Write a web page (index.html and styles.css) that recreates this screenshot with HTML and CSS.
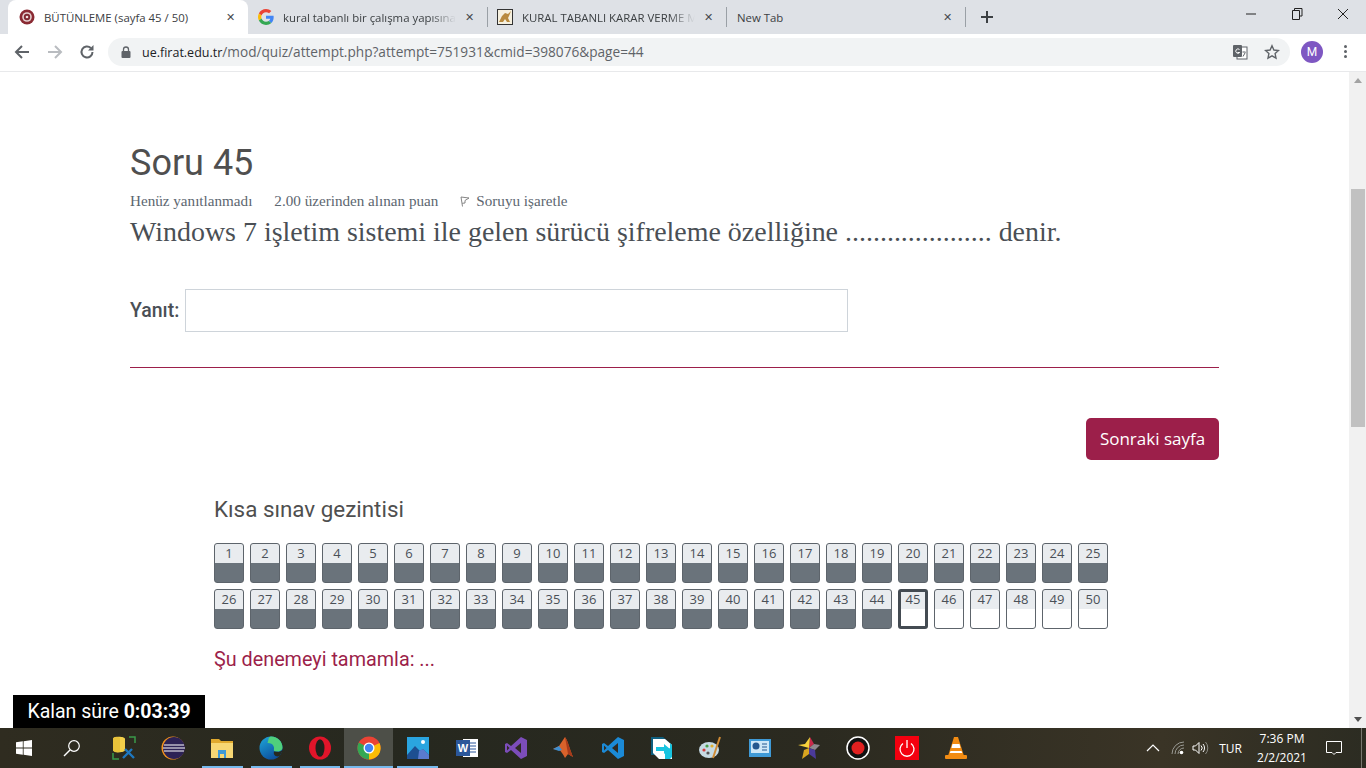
FILE: index.html

```html
<!DOCTYPE html>
<html lang="tr">
<head>
  <meta charset="UTF-8" />
  <title>BÜTÜNLEME (sayfa 45 / 50)</title>
  <link rel="stylesheet" href="styles.css">
</head>
<body>
  <!-- browser tabs -->
  <div class="tabstrip">
    <div class="tab tab-active">
      <svg class="favicon" viewBox="0 0 16 16"><circle cx="8" cy="8" r="7.500" fill="#8a2a33"/><circle cx="8" cy="8" r="4.800" fill="#e4cfcf"/><circle cx="8" cy="8" r="3.200" fill="#7f2730"/><circle cx="8" cy="8" r="1.300" fill="#efe0e0"/></svg>
      <span class="tab-title">BÜTÜNLEME (sayfa 45 / 50)</span>
      <span class="tab-close">✕</span>
    </div>
    <div class="tab">
      <svg class="favicon" viewBox="0 0 48 48"><path fill="#EA4335" d="M24 9.500c3.500 0 6.700 1.200 9.200 3.600l6.900-6.900C35.900 2.400 30.500 0 24 0 14.600 0 6.500 5.400 2.600 13.200l8 6.200C12.500 13.700 17.800 9.500 24 9.500z"/><path fill="#4285F4" d="M47 24.500c0-1.600-.1-3.100-.4-4.500H24v9h12.900c-.6 3-2.200 5.500-4.700 7.200l7.700 6c4.500-4.200 7.100-10.300 7.100-17.700z"/><path fill="#FBBC05" d="M10.600 28.600c-.5-1.400-.8-3-.8-4.600s.3-3.200.8-4.600l-8-6.200C.9 16.500 0 20.100 0 24s.9 7.500 2.600 10.800l8-6.200z"/><path fill="#34A853" d="M24 48c6.500 0 11.900-2.100 15.900-5.800l-7.700-6c-2.200 1.400-4.900 2.300-8.200 2.300-6.200 0-11.500-4.200-13.400-9.900l-8 6.200C6.500 42.600 14.600 48 24 48z"/></svg>
      <span class="tab-title tab-fade">kural tabanlı bir çalışma yapısına</span>
      <span class="tab-close">✕</span>
    </div>
    <div class="tab tab-sep">
      <svg class="favicon" viewBox="0 0 16 16"><rect x=".5" y=".5" width="15" height="15" fill="#f6f0df" stroke="#333"/><path d="M2 13l3-6 3-3 3 1 3-3-2 5-1 2 2 4h-3l-2-3-2 3z" fill="#b98a3e"/></svg>
      <span class="tab-title tab-fade">KURAL TABANLI KARAR VERME M</span>
      <span class="tab-close">✕</span>
    </div>
    <div class="tab tab-sep tab-new">
      <span class="tab-title">New Tab</span>
      <span class="tab-close">✕</span>
    </div>
    <div class="tab-sep new-tab-btn">
      <svg width="14" height="14" viewBox="0 0 14 14"><path d="M7 1v12M1 7h12" stroke="#3c4043" stroke-width="2"/></svg>
    </div>
    <div class="window-buttons">
      <svg width="12" height="12" viewBox="0 0 12 12"><path d="M1 6h10" stroke="#222" stroke-width="1"/></svg>
      <svg width="12" height="12" viewBox="0 0 12 12"><path d="M3.500 2.500V.5h7.500v7.500h-2M1.500 2.500h7v9h-7z" fill="none" stroke="#222"/></svg>
      <svg width="12" height="12" viewBox="0 0 12 12"><path d="M1 1l10 10M11 1L1 11" stroke="#222"/></svg>
    </div>
  </div>

  <!-- address bar -->
  <div class="toolbar">
    <svg class="nav-icon" viewBox="0 0 16 16"><path d="M15 8H2M8 2L2 8l6 6" fill="none" stroke="#5f6368" stroke-width="2"/></svg>
    <svg class="nav-icon" viewBox="0 0 16 16"><path d="M1 8h13M8 2l6 6-6 6" fill="none" stroke="#b9bcc0" stroke-width="2"/></svg>
    <svg class="nav-icon" viewBox="0 0 16 16"><path d="M13.500 8a5.500 5.500 0 1 1-1.700-4" fill="none" stroke="#5f6368" stroke-width="2"/><path d="M14.500 1v5.500H9z" fill="#5f6368"/></svg>
    <div class="omnibox">
      <svg class="lock" viewBox="0 0 10 12"><path d="M2.500 5V3.500a2.500 2.500 0 0 1 5 0V5" fill="none" stroke="#5f6368" stroke-width="1.300"/><rect x=".5" y="5" width="9" height="7" rx="1" fill="#5f6368"/></svg>
      <span class="url"><span class="url-host">ue.firat.edu.tr</span>/mod/quiz/attempt.php?attempt=751931&amp;cmid=398076&amp;page=44</span>
      <svg class="omni-icon translate" viewBox="0 0 16 16"><rect x="5" y="3" width="10" height="12" fill="#fff" stroke="#5f6368"/><rect x="1" y="1" width="9" height="12" rx="1" fill="#5f6368"/><path d="M7.500 5.500a2.200 2.200 0 1 0 .2 3H5.500" fill="none" stroke="#fff"/><path d="M10.500 8h3M11 12.500l2.300-4" stroke="#5f6368" fill="none"/></svg>
      <svg class="omni-icon" viewBox="0 0 16 16"><path d="M8 1.800l1.900 4.200 4.600.5-3.400 3.100.9 4.600L8 11.900l-4 2.300.9-4.600L1.500 6.500l4.600-.5z" fill="none" stroke="#5f6368" stroke-width="1.400"/></svg>
    </div>
    <div class="avatar">M</div>
    <div class="kebab"><i></i><i></i><i></i></div>
  </div>

  <div class="viewport">
    <main class="page">
      <h1 class="q-title">Soru 45</h1>
      <div class="q-info">
        <span>Henüz yanıtlanmadı</span>
        <span>2.00 üzerinden alınan puan</span>
        <span class="q-flag">
          <svg width="10" height="12" viewBox="0 0 10 12"><path d="M2.500 11.500L1 2l8 1-4 2.500 0 2.500-2.800.3" fill="none" stroke="#777" stroke-width=".9"/></svg>
          Soruyu işaretle
        </span>
      </div>
      <p class="q-text">Windows 7 işletim sistemi ile gelen sürücü şifreleme özelliğine ..................... denir.</p>
      <div class="answer">
        <label class="answer-label" for="answer">Yanıt:</label>
        <input class="answer-input" id="answer" type="text" />
      </div>
      <hr class="divider" />
      <div class="next-row"><button class="next-btn" type="button">Sonraki sayfa</button></div>

      <section class="quiz-nav">
        <h2 class="nav-title">Kısa sınav gezintisi</h2>
        <div class="nav-grid">
          <a class="qn answered">1</a><a class="qn answered">2</a><a class="qn answered">3</a><a class="qn answered">4</a><a class="qn answered">5</a>
          <a class="qn answered">6</a><a class="qn answered">7</a><a class="qn answered">8</a><a class="qn answered">9</a><a class="qn answered">10</a>
          <a class="qn answered">11</a><a class="qn answered">12</a><a class="qn answered">13</a><a class="qn answered">14</a><a class="qn answered">15</a>
          <a class="qn answered">16</a><a class="qn answered">17</a><a class="qn answered">18</a><a class="qn answered">19</a><a class="qn answered">20</a>
          <a class="qn answered">21</a><a class="qn answered">22</a><a class="qn answered">23</a><a class="qn answered">24</a><a class="qn answered">25</a>
          <a class="qn answered">26</a><a class="qn answered">27</a><a class="qn answered">28</a><a class="qn answered">29</a><a class="qn answered">30</a>
          <a class="qn answered">31</a><a class="qn answered">32</a><a class="qn answered">33</a><a class="qn answered">34</a><a class="qn answered">35</a>
          <a class="qn answered">36</a><a class="qn answered">37</a><a class="qn answered">38</a><a class="qn answered">39</a><a class="qn answered">40</a>
          <a class="qn answered">41</a><a class="qn answered">42</a><a class="qn answered">43</a><a class="qn answered">44</a><a class="qn current">45</a>
          <a class="qn">46</a><a class="qn">47</a><a class="qn">48</a><a class="qn">49</a><a class="qn">50</a>
        </div>
        <a class="finish-link">Şu denemeyi tamamla: ...</a>
      </section>
    </main>
    <div class="scrollbar">
      <div class="sb-arrow sb-up"></div>
      <div class="sb-track"><div class="sb-thumb"></div></div>
      <div class="sb-arrow sb-down"></div>
    </div>
    <div class="timer">Kalan süre <b>0:03:39</b></div>
  </div>

  <!-- windows taskbar -->
  <footer class="taskbar">
    <div class="task-system">
      <svg width="16" height="16" viewBox="0 0 16 16"><path fill="#fff" d="M0 2.300l6.800-1v6.300H0zM7.600 1.200L16 0v7.600H7.600zM0 8.400h6.800v6.300l-6.800-1zM7.600 8.400H16V16l-8.400-1.200z"/></svg>
    </div>
    <div class="task-system">
      <svg width="18" height="18" viewBox="0 0 18 18"><circle cx="11" cy="7" r="5.300" fill="none" stroke="#fff" stroke-width="1.200"/><path d="M7 11l-6 6" stroke="#fff" stroke-width="1.400"/></svg>
    </div>
    <div class="task-apps">
      <div class="app"><svg viewBox="0 0 24 24"><path d="M17 1h6v6M1 17v6h6" fill="none" stroke="#3a9a4a" stroke-width="1.500"/><path d="M1 3c0-3 12-3 12 0v11c0 3-12 3-12 0z" fill="#f2cf4a"/><path d="M1 3c0-3 7-3 7 0v13c-3 1-7 0-7-2z" fill="#e8c23a"/><path d="M11 22l9-9M13 13l9 9" stroke="#1f78c0" stroke-width="2.400"/></svg></div>
      <div class="app"><svg viewBox="0 0 24 24"><circle cx="12" cy="12" r="11.500" fill="#f7941e"/><circle cx="13" cy="12" r="11" fill="#2c2255"/><path d="M3 9h20M2 12h22M3 15h20" stroke="#fff" stroke-width="1.200"/></svg></div>
      <div class="app running"><svg viewBox="0 0 24 24"><path d="M1 3h8l2 2h12v4H1z" fill="#e0a92e"/><rect x="1" y="7" width="22" height="15" fill="#f7d774"/><path d="M8 14h8v8h-2v-4h-4v4H8z" fill="#3f9ad6"/></svg></div>
      <div class="app running"><svg viewBox="0 0 24 24"><defs><linearGradient id="edge" x1="0" y1="0" x2=".6" y2="1"><stop offset="0" stop-color="#1fa7d9"/><stop offset="1" stop-color="#0c4f9e"/></linearGradient></defs><circle cx="12" cy="12" r="11.500" fill="url(#edge)"/><path d="M12 .5C19 .5 23.500 6 23.500 11.500c0 3-3.500 4.500-6.500 4-2-.3-2.500-1-2-2.500C15.500 9.500 12.500 6.500 8.500 7 10 3 9 1 12 .5z" fill="#4fd07c"/><path d="M15 15.500c-1 3 1.500 6 5.500 4.500l3.500-6-4 2z" fill="#26281f"/></svg></div>
      <div class="app running"><svg viewBox="0 0 24 24"><ellipse cx="12" cy="12" rx="11" ry="11.500" fill="#e1152a"/><ellipse cx="12" cy="12" rx="4.500" ry="8.800" fill="#20221c"/></svg></div>
      <div class="app running app-current"><svg viewBox="0 0 24 24"><circle cx="12" cy="12" r="11.500" fill="#ea4335"/><path d="M12 12L22.500 7A11.500 11.500 0 0 1 12 23.500z" fill="#fbbc05"/><path d="M12 12L12 23.500A11.500 11.500 0 0 1 1.800 6.500z" fill="#34a853"/><circle cx="12" cy="12" r="5.500" fill="#fff"/><circle cx="12" cy="12" r="4.200" fill="#4285f4"/></svg></div>
      <div class="app running"><svg viewBox="0 0 24 24"><rect x="1" y="1" width="22" height="22" fill="#2aa5e0"/><path d="M1 19l8-9 5 5 3-2 6 6v4H1z" fill="#1d4f91"/><path d="M13 15l4-2 6 6v4H12z" fill="#5a7bd0"/><circle cx="17" cy="6" r="2" fill="#fff"/></svg></div>
      <div class="app"><svg viewBox="0 0 24 24"><rect x="8" y="3" width="15" height="18" fill="#fff"/><path d="M14 7h7M14 10h7M14 13h7M14 16h7" stroke="#2b579a"/><rect x="1" y="4" width="14" height="16" fill="#2b579a"/><text class="word-w" x="8" y="16" text-anchor="middle">W</text></svg></div>
      <div class="app"><svg viewBox="0 0 24 24"><path d="M17 1l6 3v16l-6 3-10-9-4 3-2-1V8l2-1 4 3z" fill="#7c4dba"/><path d="M17 7l-6 5 6 5z" fill="#2f2a22"/><path d="M3 9.500v5l2.500-2.500z" fill="#2f2a22"/></svg></div>
      <div class="app"><svg viewBox="0 0 24 24"><path d="M1 13l6-3 6-9c3 4 5 13 8 20l-5-3-3 4c-2-4-4-7-6-8z" fill="#d9622b"/><path d="M1 13l6-3 3 4-3 1z" fill="#3f8fd0"/><path d="M13 1c3 4 5 13 8 20l-5-3z" fill="#a83a1a"/></svg></div>
      <div class="app"><svg viewBox="0 0 24 24"><path d="M17 1l6 3v16l-6 3-10-9-4 3-2-1V8l2-1 4 3z" fill="#1b8ad6"/><path d="M17 7l-6 5 6 5z" fill="#2f2a22"/><path d="M3 9.500v5l2.500-2.500z" fill="#2f2a22"/></svg></div>
      <div class="app"><svg viewBox="0 0 24 24"><path d="M1 1h12l6 5v13H1z" fill="#0f5f7f"/><path d="M3 3h12l7 6v14H9l-6-6z" fill="#fff"/><path d="M15 16v7h5l2-2V9l-2-2v5z" fill="#18c4e0"/><path d="M6 11h8V8l6 5-6 5v-3H6z" fill="#18c4e0"/></svg></div>
      <div class="app"><svg viewBox="0 0 24 24"><ellipse cx="10" cy="14" rx="10" ry="8" fill="#c7dbe4"/><circle cx="5" cy="14" r="1.600" fill="#d43d3d"/><circle cx="8" cy="10" r="1.600" fill="#4aa04a"/><circle cx="13" cy="10" r="1.600" fill="#e0b030"/><circle cx="9" cy="17" r="1.600" fill="#555"/><path d="M21 1l-7 21" stroke="#d08b35" stroke-width="2"/></svg></div>
      <div class="app"><svg viewBox="0 0 24 24"><rect x="1" y="3" width="22" height="18" fill="#3f9ad6"/><rect x="3" y="5" width="18" height="12" fill="#cfe8f7"/><circle cx="8" cy="10" r="3.500" fill="#24588f"/><path d="M14 8h5M14 11h5M14 14h5" stroke="#24588f"/></svg></div>
      <div class="app"><svg viewBox="0 0 24 24"><path d="M12 12L13 1l4 7z" fill="#c92a4b"/><path d="M12 12l5-4 6 1-5 5z" fill="#8f8a8e"/><path d="M12 12l6 2 1 9-7-5z" fill="#4b3a9a"/><path d="M12 12v6l-7 5 2-9z" fill="#d9a520"/><path d="M12 12L1 9l7-1 5-7z" fill="#f7d23c"/></svg></div>
      <div class="app"><svg viewBox="0 0 24 24"><circle cx="12" cy="12" r="11" fill="#111" stroke="#fff" stroke-width="1.500"/><circle cx="12" cy="12" r="6.500" fill="#e02020"/></svg></div>
      <div class="app"><svg viewBox="0 0 24 24"><rect width="24" height="24" fill="#f4000f"/><path d="M8 7.500a7 7 0 1 0 8 0M12 4v8" fill="none" stroke="#fff" stroke-width="1.300"/></svg></div>
      <div class="app"><svg viewBox="0 0 24 24"><path d="M10 1h4l6 19H4z" fill="#f28c13"/><path d="M8.500 8h7l1 4H7.500zM6.500 15h11l.8 2H5.800z" fill="#fff"/><rect x="1" y="19" width="22" height="4" rx="1" fill="#f28c13"/></svg></div>
    </div>
    <div class="tray">
      <svg width="14" height="8" viewBox="0 0 14 8"><path d="M1 7l6-6 6 6" fill="none" stroke="#fff" stroke-width="1.200"/></svg>
      <svg class="tray-wifi" width="14" height="14" viewBox="0 0 14 14"><path d="M1 13a12 12 0 0 1 12-12M4 13a9 9 0 0 1 9-9M7 13a6 6 0 0 1 6-6" fill="none" stroke="#9a9a94"/><circle cx="10.500" cy="11.500" r="1.800" fill="#fff"/></svg>
      <svg class="tray-sound" width="17" height="14" viewBox="0 0 17 14"><path d="M1 5h2.500L7 1.500v11L3.500 9H1z" fill="none" stroke="#fff"/><path d="M9 4.500a3.500 3.500 0 0 1 0 5M11 3a6 6 0 0 1 0 8" fill="none" stroke="#fff"/><path d="M13.500 1a9 9 0 0 1 0 12" fill="none" stroke="#8a8a84"/></svg>
      <span class="tray-lang">TUR</span>
      <div class="tray-clock"><span>7:36 PM</span><span>2/2/2021</span></div>
      <svg class="tray-note" width="16" height="16" viewBox="0 0 16 16"><path d="M.5 1.500h15v11H10l-2 2-2-2H.5z" fill="none" stroke="#fff"/></svg>
      <div class="show-desktop"></div>
    </div>
  </footer>
</body>
</html>
```

FILE: styles.css

```css
* {
  box-sizing: border-box;
}
html, body {
  height: 100%;
}
body {
  margin: 0;
  height: 768px;
  overflow: hidden;
  display: flex;
  flex-direction: column;
  background: #fff;
  font-family: 'Roboto', sans-serif;
  color: #495057;
}

/* browser chrome */
.tabstrip {
  height: 34px;
  flex: none;
  display: flex;
  align-items: stretch;
  background: #dee1e6;
  padding-left: 8px;
  font-family: 'Open Sans', sans-serif;
  font-size: 11.400px;
  color: #3c4043;
}
.tab {
  width: 239px;
  display: flex;
  align-items: center;
  padding: 0 10px;
  gap: 9px;
  position: relative;
}
.tab-active {
  background: #fff;
  width: 240px;
  border-radius: 8px 8px 0 0;
  padding-left: 11px;
}
.tab-sep::before {
  content: "";
  position: absolute;
  left: 0;
  top: 7px;
  height: 20px;
  width: 1px;
  background: #9aa0a6;
}
.tab-new {
  padding-left: 11px;
}
.favicon {
  width: 16px;
  height: 16px;
  flex: none;
}
.tab-title {
  flex: 1;
  min-width: 0;
  white-space: nowrap;
}
.tab-fade {
  -webkit-mask-image: linear-gradient(90deg, #000 85%, transparent);
  mask-image: linear-gradient(90deg, #000 85%, transparent);
}
.tab-close {
  font-size: 11px;
  font-weight: 700;
  color: #45494e;
  width: 12px;
  flex: none;
  font-family: 'DejaVu Sans', sans-serif;
}
.new-tab-btn {
  position: relative;
  width: 44px;
  display: flex;
  align-items: center;
  justify-content: center;
}
.window-buttons {
  margin-left: auto;
  display: flex;
  align-items: flex-start;
  gap: 34px;
  padding: 8px 17px 0 0;
}

.toolbar {
  height: 38px;
  flex: none;
  display: flex;
  align-items: center;
  background: #fff;
  padding: 0 0 2px 14px;
  border-bottom: 1px solid #e8e9eb;
}
.nav-icon {
  width: 16px;
  height: 16px;
  margin-right: 16.500px;
}
.omnibox {
  margin-left: -3.500px;
  width: 1182px;
  height: 28px;
  border-radius: 14px;
  background: #f1f3f4;
  display: flex;
  align-items: center;
  padding: 0 10px 0 13px;
}
.lock {
  width: 10px;
  height: 12px;
  margin-right: 11px;
}
.url {
  flex: 1;
  font-family: 'Open Sans', sans-serif;
  font-size: 13.650px;
  color: #5f6368;
}
.url-host {
  font-size: 12.500px;
  color: #202124;
}
.omni-icon {
  width: 16px;
  height: 16px;
  margin-left: 16px;
}
.translate {
  margin-left: 0;
}
.avatar {
  width: 22px;
  height: 22px;
  margin-left: 11px;
  border-radius: 50%;
  background: #7e57c2;
  color: #fff;
  font-size: 12px;
  display: flex;
  align-items: center;
  justify-content: center;
}
.kebab {
  margin-left: 21px;
  display: flex;
  flex-direction: column;
  gap: 2px;
}
.kebab i {
  width: 3px;
  height: 3px;
  border-radius: 50%;
  background: #5f6368;
}

/* page */
.viewport {
  flex: 1;
  min-height: 0;
  display: flex;
  position: relative;
}
.page {
  flex: 1;
  padding: 0 130px;
  background: #fff;
}
.q-title {
  margin: 69px 0 0;
  font-size: 36px;
  font-weight: 400;
  line-height: 44px;
  color: #4f4f4f;
}
.q-info {
  margin-top: 7px;
  display: flex;
  gap: 22px;
  font-family: 'Liberation Serif', serif;
  font-size: 15.150px;
  line-height: 17px;
  color: #5c6670;
}
.q-flag {
  display: flex;
  align-items: center;
  gap: 6px;
}
.q-text {
  margin: 5px 0 0;
  font-family: 'Liberation Serif', serif;
  font-size: 27.950px;
  line-height: 36px;
  color: #4a4f55;
}
.answer {
  margin-top: 39px;
  display: flex;
  align-items: center;
  gap: 6px;
}
.answer-label {
  font-size: 19.500px;
  font-weight: 500;
  color: #4a4f55;
}
.answer-input {
  width: 663px;
  height: 43px;
  border: 1px solid #ced4da;
  background: #fff;
}
.divider {
  margin: 35px 0 0;
  border: 0;
  border-top: 1px solid #9c1f4a;
}
.next-row {
  display: flex;
  justify-content: flex-end;
  margin-top: 50px;
}
.next-btn {
  width: 133px;
  height: 42px;
  padding: 0 0 2px;
  border: 0;
  border-radius: 5px;
  background: #9c1f4a;
  color: #fff;
  font-family: 'Open Sans', sans-serif;
  font-size: 17px;
}
.quiz-nav {
  margin: 36px 0 0 84px;
}
.nav-title {
  margin: 0;
  font-size: 22.400px;
  font-weight: 400;
  line-height: 26px;
  color: #4f4f4f;
}
.nav-grid {
  margin-top: 21px;
  display: grid;
  grid-template-columns: repeat(25, 30px);
  grid-auto-rows: 40px;
  gap: 6px;
}
.qn {
  border: 1px solid #5d646b;
  border-radius: 3px;
  background: linear-gradient(#e9ecef 0 19px, #fff 19px);
  font-family: 'Open Sans', sans-serif;
  font-size: 13px;
  line-height: 18px;
  text-align: center;
  color: #495057;
  overflow: hidden;
}
.answered {
  background: linear-gradient(#e9ecef 0 19px, #6a737b 19px);
}
.current {
  border: 3px solid #444b52;
  line-height: 14px;
  background: linear-gradient(#e9ecef 0 17px, #fff 17px);
}
.finish-link {
  display: block;
  margin-top: 18px;
  font-size: 19.800px;
  line-height: 26px;
  color: #9c1f4a;
}
.timer {
  position: absolute;
  left: 13px;
  bottom: 0;
  width: 192px;
  height: 33px;
  background: #000;
  color: #fff;
  font-size: 19.500px;
  line-height: 33px;
  text-align: center;
}
.timer b {
  font-weight: 700;
}

.scrollbar {
  width: 17px;
  flex: none;
  background: #f1f1f1;
  display: flex;
  flex-direction: column;
}
.sb-arrow {
  height: 17px;
  flex: none;
  display: flex;
  align-items: center;
  justify-content: center;
}
.sb-arrow::after {
  content: "";
  border-left: 4px solid transparent;
  border-right: 4px solid transparent;
}
.sb-up::after {
  border-bottom: 5px solid #a3a3a3;
}
.sb-down::after {
  border-top: 5px solid #505050;
}
.sb-track {
  flex: 1;
  padding-top: 100px;
}
.sb-thumb {
  height: 238px;
  background: #c1c1c1;
  margin: 0 1px 0 2px;
}

/* taskbar */
.taskbar {
  height: 40px;
  flex: none;
  display: flex;
  align-items: center;
  background: linear-gradient(90deg, #2f2c20, #26281f 30%, #2b2a20 60%, #3a3426 85%, #2c2c22);
}
.task-system {
  width: 48px;
  height: 40px;
  display: flex;
  align-items: center;
  justify-content: center;
}
.task-apps {
  display: flex;
  margin-left: 4px;
}
.app {
  width: 48.900px;
  height: 40px;
  display: flex;
  align-items: center;
  justify-content: center;
  position: relative;
}
.app svg {
  width: 24px;
  height: 24px;
}
.running::after {
  content: "";
  position: absolute;
  left: 4px;
  right: 4px;
  bottom: 0;
  height: 2px;
  background: #76b9ed;
}
.app-current {
  background: #4d4f48;
}
.app-current::after {
  left: 0;
  right: 0;
}
.word-w {
  font-family: 'Liberation Sans', sans-serif;
  font-size: 11px;
  font-weight: 700;
  fill: #fff;
}
.tray {
  margin-left: auto;
  height: 40px;
  display: flex;
  align-items: center;
  color: #fff;
  font-family: 'Open Sans', sans-serif;
  font-size: 12px;
}
.tray-wifi {
  margin-left: 11px;
}
.tray-sound {
  margin-left: 7px;
}
.tray-lang {
  margin-left: 10px;
}
.tray-clock {
  margin-left: 16px;
  width: 48px;
  display: flex;
  flex-direction: column;
  align-items: center;
  line-height: 19px;
}
.tray-note {
  margin-left: 20px;
}
.show-desktop {
  margin-left: 19px;
  width: 5px;
  height: 40px;
  border-left: 1px solid #77776f;
}
```
